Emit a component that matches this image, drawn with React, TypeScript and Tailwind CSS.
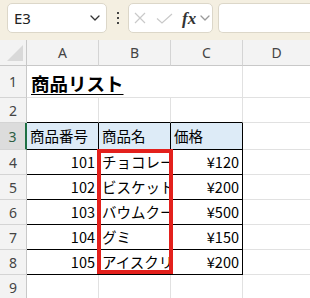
import React from 'react';

// Column widths include the 1px right gridline of each cell.
const COLS = ['A', 'B', 'C', 'D'];
const ROW_HEIGHTS = [32, 25, 27, 25, 25, 25, 25, 25, 25];

const items = [
  { id: 101, name: 'チョコレート', price: '¥120' },
  { id: 102, name: 'ビスケット', price: '¥200' },
  { id: 103, name: 'バウムクーヘン', price: '¥500' },
  { id: 104, name: 'グミ', price: '¥150' },
  { id: 105, name: 'アイスクリーム', price: '¥200' },
];

const cellFont = { fontFamily: '"Noto Sans CJK JP", "Noto Sans", sans-serif' };
const uiFont = { fontFamily: '"Noto Sans", "Liberation Sans", sans-serif' };

function Chevron({ className }: { className?: string }) {
  return (
    <svg className={className} width="10" height="6" viewBox="0 0 10 6" fill="none">
      <path d="M1 1l4 4 4-4" stroke="currentColor" strokeWidth="1.3" strokeLinecap="round" strokeLinejoin="round" />
    </svg>
  );
}

function Toolbar() {
  return (
    <div className="flex h-[40px] items-start gap-0 bg-[#f4efe1] pt-[3px]">
      <div className="ml-[7px] flex h-[30px] w-[100px] items-center justify-between rounded-[5px] border border-[#dcd7c9] bg-white pl-[6px] pr-[6px]">
        <span className="text-[15px] text-[#222]" style={uiFont}>E3</span>
        <Chevron className="text-[#333]" />
      </div>
      <div className="ml-[9px] flex h-[30px] w-[4px] flex-col items-center justify-center gap-[3px]">
        <span className="h-[2px] w-[2px] bg-[#444]" />
        <span className="h-[2px] w-[2px] bg-[#444]" />
        <span className="h-[2px] w-[2px] bg-[#444]" />
      </div>
      <div className="ml-[8px] flex h-[30px] w-[85px] items-center rounded-[5px] border border-[#dcd7c9] bg-white">
        <svg className="ml-[5px]" width="12" height="12" viewBox="0 0 12 12" fill="none">
          <path d="M1 1l10 10M11 1L1 11" stroke="#c9c9c9" strokeWidth="1.2" />
        </svg>
        <svg className="ml-[10px]" width="17" height="11" viewBox="0 0 17 11" fill="none">
          <path d="M1 5.5l5 4.5L16 1" stroke="#c9c9c9" strokeWidth="1.2" />
        </svg>
        <span
          className="ml-[9px] text-[17px] font-bold italic leading-none text-[#333]"
          style={{ fontFamily: '"Liberation Serif", "DejaVu Serif", serif' }}
        >
          fx
        </span>
        <Chevron className="ml-[4px] text-[#9a9a9a]" />
      </div>
      <div className="ml-[5px] h-[30px] flex-1 rounded-l-[5px] border border-r-0 border-[#dcd7c9] bg-white" />
    </div>
  );
}

function Sheet() {
  const grid = 'border-[#e1e1e1]';
  const rows: React.ReactNode[] = [];

  ROW_HEIGHTS.forEach((h, i) => {
    const r = i + 1;
    const selected = r === 3;
    rows.push(
      <div
        key={`h${r}`}
        className={`flex items-center justify-center border-b border-[#d4d4d4] text-[14px] ${
          selected
            ? 'border-r-2 border-r-[#1e7145] bg-[#dcdcdc] text-[#2d5e43]'
            : 'border-r border-r-[#c8c8c8] bg-[#f3f3f3] text-[#444]'
        }`}
        style={{ ...uiFont, height: h }}
      >
        {r}
      </div>
    );

    if (r === 1) {
      rows.push(
        <div key="t" className={`col-span-2 flex items-end border-b ${grid} pb-[5px] pl-[4px]`}>
          <span className="text-[18.5px] font-bold leading-none text-black underline underline-offset-[3px]" style={cellFont}>
            商品リスト
          </span>
        </div>,
        <div key="c1" className={`border-r border-b ${grid}`} />,
        <div key="d1" className={`border-b ${grid}`} />
      );
      return;
    }

    const item = r >= 4 && r <= 8 ? items[r - 4] : null;
    const inTable = r >= 3 && r <= 8;
    const topRow = r === 2;

    COLS.forEach((c, ci) => {
      let text: React.ReactNode = null;
      let align = 'justify-start';
      if (r === 3 && c === 'A') text = '商品番号';
      if (r === 3 && c === 'B') text = '商品名';
      if (r === 3 && c === 'C') text = '価格';
      if (item && c === 'A') { text = item.id; align = 'justify-end'; }
      if (item && c === 'B') text = item.name;
      if (item && c === 'C') { text = item.price; align = 'justify-end'; }

      const tableCol = ci < 3;
      const border =
        inTable && tableCol
          ? 'border-r border-b border-black'
          : topRow && tableCol
          ? `border-r ${grid} border-b border-b-black`
          : ci === 3
          ? `border-b ${grid}`
          : `border-r border-b ${grid}`;
      const bg = r === 3 && tableCol ? 'bg-[#ddebf7]' : 'bg-white';

      rows.push(
        <div
          key={`${c}${r}`}
          className={`flex items-center overflow-hidden whitespace-nowrap px-[3px] text-[14.5px] text-black ${align} ${border} ${bg}`}
          style={cellFont}
        >
          {text}
        </div>
      );
    });
  });

  return (
    <div className="relative">
      <div
        className="grid grid-cols-[27px_72px_72px_72px_1fr]"
        style={{ gridTemplateRows: `26px ${ROW_HEIGHTS.map((h) => `${h}px`).join(' ')}` }}
      >
        <div className="relative border-r border-b border-[#c8c8c8] bg-[#f3f3f3]">
          <svg className="absolute left-[7px] top-[5px]" width="16" height="16" viewBox="0 0 16 16">
            <path d="M16 0V16H0Z" fill="#d9d9d9" />
          </svg>
        </div>
        {COLS.map((c, i) => (
          <div
            key={c}
            className={`flex items-center justify-center border-b border-[#c8c8c8] bg-[#f3f3f3] text-[14px] text-[#444] ${
              i < 3 ? 'border-r border-r-[#d4d4d4]' : ''
            }`}
            style={uiFont}
          >
            {c}
          </div>
        ))}
        {rows}
      </div>
      {/* highlight frame over the product names */}
      <div className="pointer-events-none absolute left-[97px] top-[109px] h-[125px] w-[76px] border-[4px] border-[#e3201c]" />
    </div>
  );
}

export default function App() {
  return (
    <div className="h-[298px] w-[310px] overflow-hidden bg-white">
      <Toolbar />
      <Sheet />
    </div>
  );
}
